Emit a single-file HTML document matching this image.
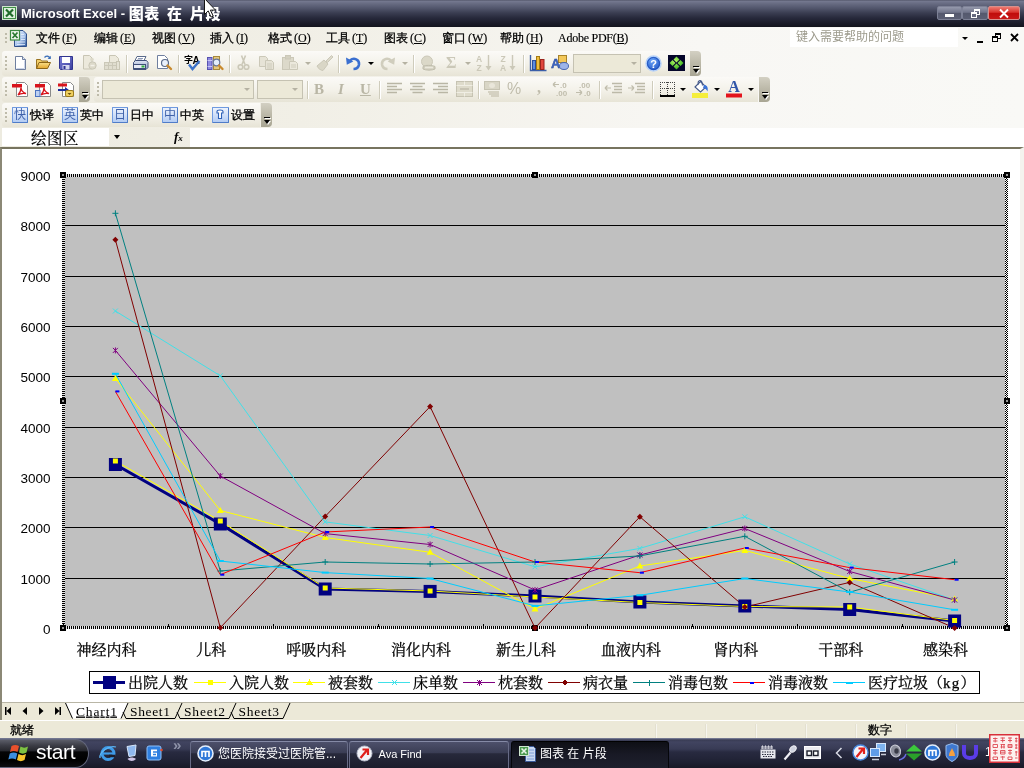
<!DOCTYPE html>
<html lang="zh-CN">
<head>
<meta charset="utf-8">
<title>Microsoft Excel - 图表 在 片段</title>
<style>
*{box-sizing:border-box;margin:0;padding:0}
html,body{width:1024px;height:768px;overflow:hidden;background:#fff}
body{will-change:transform;opacity:0.9999}
body{position:relative;font-family:"Liberation Serif","WenQuanYi Zen Hei","Noto Serif CJK SC",serif;font-size:12px;color:#000}
.abs,.i,.sep,.grip,.cap,.arr,.combo{position:absolute}
svg{overflow:visible}
#chart text{stroke:#000;stroke-width:0.25px}
#chart text.yl{stroke:none}
#titlebar{position:absolute;left:0;top:0;width:1024px;height:27px;background:linear-gradient(#4a4d60 0,#767a91 1px,#6a6e85 3px,#53576d 8px,#3a3d51 13px,#27293b 18px,#1b1c2a 23px,#13141d 27px)}
#title{position:absolute;left:21px;top:4px;color:#fff;font:bold 13px/18px "Liberation Sans","Noto Sans CJK SC",sans-serif;white-space:nowrap;letter-spacing:0}
#title b{font-size:15px;letter-spacing:0.6px;word-spacing:2.5px;position:relative;top:0.5px}
.wb{position:absolute;top:6px;height:14px;border:1px solid #7d8196;border-radius:2px;background:linear-gradient(#9599ac,#70748a 45%,#54586d 50%,#5b5f74)}
#dock{position:absolute;left:0;top:27px;width:1024px;height:121px;background:linear-gradient(90deg,#edebe0 0,#f1efe6 300px,#f8f7f4 700px,#f9f9f6 1024px)}
.mi{position:absolute;top:31px;font-size:12px;line-height:14px;white-space:nowrap;-webkit-text-stroke:0.3px #000}
.mi span,.mono{font-family:"Liberation Serif",serif;font-size:12px;letter-spacing:0;margin-left:2px;-webkit-text-stroke:0.15px #000}
.tb{position:absolute;left:2px;border-radius:3px 0 0 3px;background:linear-gradient(#fbfaf7 0,#f4f2ea 50%,#e7e4d6 100%)}
.cap{width:11px;border-radius:0 4px 4px 0;background:linear-gradient(#d3d0c3 0,#bdbaaa 45%,#a8a593 100%)}
.cap:before{content:"";position:absolute;left:3px;bottom:9px;width:6px;height:1px;background:#000;box-shadow:1px 1px 0 #fff}
.cap:after{content:"";position:absolute;left:3px;bottom:3px;border:3px solid transparent;border-top:4px solid #000;border-bottom:0;filter:drop-shadow(1px 1px 0 #fff)}
.grip{left:5px;width:2px;background:repeating-linear-gradient(#bebbaa 0,#bebbaa 2px,transparent 2px,transparent 4px)}
.sep{width:1px;height:18px;background:#cfccbc;box-shadow:1px 0 0 #fff}
.arr{width:0;height:0;border:3px solid transparent;border-top:3px solid #000;border-bottom:0;margin-left:-0.5px}
.arr.d{border-top-color:#b5b2a2}
.combo{background:#ece9d8;border:1px solid #c5c2b2}
#chartbg{position:absolute;left:0;top:147px;width:1024px;border-right:4px solid #f4f3ee;height:555px;background:#fff;border-top:2px solid #77745f;border-left:2px solid #8b8876}
#tabs{position:absolute;left:0;top:702px;width:1024px;height:18px;background:#ece9d8;border-top:1px solid #b9b6a6}
#status{position:absolute;left:0;top:720px;width:1024px;height:18px;background:#ece9d8;border-top:1px solid #fff}
#taskbar{position:absolute;left:0;top:738px;width:1024px;height:30px;background:linear-gradient(#8a8fa6 0,#5a5e78 1px,#3a3d55 2px,#414460 4px,#383b55 11px,#282a40 14px,#1f2133 24px,#181926 30px)}
.tbtn{position:absolute;top:3px;height:27px;border-radius:3px 3px 0 0;border:1px solid #676b86;border-bottom:0;border-top-color:#858aa6;background:linear-gradient(#4d506b 0,#3a3d54 42%,#27293b 45%,#1c1d2c 100%);color:#fff;font:12px "Liberation Sans","Noto Sans CJK SC",sans-serif;line-height:24px;white-space:nowrap;overflow:hidden}
.tbtn.act{background:linear-gradient(#0e0f15,#191a26 50%,#1d1f2c);border-color:#05060a;border-top-color:#000}
</style>
</head>
<body>
<div id="titlebar">
<svg class="abs" style="left:2px;top:5px" width="16" height="16" viewBox="0 0 16 16"><rect x="0.5" y="1.5" width="14" height="13" fill="#3f8f46" stroke="#cfe6cf"/><rect x="2" y="3" width="11" height="10" fill="#dff0df"/><path d="M4 4.5l7 7m0-7l-7 7" stroke="#1f6b2a" stroke-width="2.2"/></svg>
<div id="title">Microsoft Excel - <b>图表 在 片段</b></div>
<svg class="abs" style="left:204px;top:-2px" width="13" height="20" viewBox="0 0 13 20"><path d="M0.500 0.500v16l3.700-3.600l2.800 6.200l2.200-1l-2.800-6h5.100z" fill="#fff" stroke="#000" stroke-width="0.900"/></svg>
<div class="wb" style="left:937px;width:25px"><i class="abs" style="left:7px;top:7px;width:9px;height:3px;background:#fff"></i></div>
<div class="wb" style="left:962px;width:26px"><i class="abs" style="left:11px;top:2px;width:6px;height:6px;border:1px solid #fff;border-top-width:2px"></i><i class="abs" style="left:8px;top:5px;width:6px;height:6px;border:1px solid #fff;border-top-width:2px;background:#666a80"></i></div>
<div class="wb" style="left:988px;width:32px;background:linear-gradient(#ee7a70,#d8322c 45%,#c00c0a 50%,#c81818);border-color:#d8908c"><svg class="abs" style="left:10px;top:2px" width="10" height="9" viewBox="0 0 10 9"><path d="M1 0.500l8 8m0-8l-8 8" stroke="#fff" stroke-width="1.900"/></svg></div>
</div>
<div id="dock"></div>
<!-- menu bar -->
<div class="grip" style="top:33px;height:12px"></div>
<svg class="abs" style="left:10px;top:30px" width="18" height="18" viewBox="0 0 18 18"><defs><linearGradient id="gxl" x1="0" y1="0" x2="1" y2="1"><stop offset="0" stop-color="#f4f8ff"/><stop offset="0.55" stop-color="#a9c4ec"/><stop offset="1" stop-color="#2f5a9c"/></linearGradient></defs><path d="M4.500 0.500h8.500l3.500 3.500v12.500h-12z" fill="url(#gxl)" stroke="#2f4f8a"/><path d="M11 4.500h3M11 7h4M11 9.500h4M7 12h8M7 14.500h8" stroke="#e8f0fc" stroke-width="0.800"/><rect x="0.500" y="0.500" width="9" height="9.500" fill="#f2f8f0" stroke="#3c8a40" stroke-width="1.200"/><path d="M2.500 2.500l5 5.500m0-5.500l-5 5.500" stroke="#2a7a30" stroke-width="1.800"/></svg>
<span class="mi" style="left:36px">文件<span>(<u>F</u>)</span></span>
<span class="mi" style="left:94px">编辑<span>(<u>E</u>)</span></span>
<span class="mi" style="left:152px">视图<span>(<u>V</u>)</span></span>
<span class="mi" style="left:210px">插入<span>(<u>I</u>)</span></span>
<span class="mi" style="left:268px">格式<span>(<u>O</u>)</span></span>
<span class="mi" style="left:326px">工具<span>(<u>T</u>)</span></span>
<span class="mi" style="left:384px">图表<span>(<u>C</u>)</span></span>
<span class="mi" style="left:442px">窗口<span>(<u>W</u>)</span></span>
<span class="mi" style="left:500px">帮助<span>(<u>H</u>)</span></span>
<span class="mi" style="left:558px"><span style="margin-left:0;letter-spacing:-0.25px">Adobe PDF(<u>B</u>)</span></span>
<div class="abs" style="left:790px;top:28px;width:168px;height:19px;background:#fff"></div>
<span class="abs" style="left:796px;top:30px;font:12px/14px 'Liberation Sans','Noto Sans CJK SC',sans-serif;color:#9c9a8c;white-space:nowrap">键入需要帮助的问题</span>
<i class="arr" style="left:962px;top:37px"></i>
<i class="abs" style="left:977px;top:41px;width:6px;height:2px;background:#000"></i>
<i class="abs" style="left:995px;top:33px;width:6px;height:6px;border:1px solid #000;border-top-width:2px"></i><i class="abs" style="left:992px;top:36px;width:6px;height:6px;border:1px solid #000;border-top-width:2px;background:#f8f7f3"></i>
<svg class="abs" style="left:1010px;top:33px" width="9" height="9" viewBox="0 0 9 9"><path d="M1 1l7 7m0-7l-7 7" stroke="#000" stroke-width="1.8"/></svg>
<!-- toolbar 1 -->
<div class="tb" style="top:51px;height:25px;width:689px"></div>
<div class="cap" style="left:690px;top:51px;height:25px"></div>
<div class="grip" style="top:56px;height:14px"></div>
<svg width="0" height="0" style="position:absolute"><defs>
<linearGradient id="gdoc" x1="0" y1="0" x2="1" y2="1"><stop offset="0" stop-color="#fff"/><stop offset="0.5" stop-color="#f4f6fb"/><stop offset="1" stop-color="#b9c4dc"/></linearGradient>
<linearGradient id="gfold" x1="0" y1="0" x2="0" y2="1"><stop offset="0" stop-color="#fbe08a"/><stop offset="1" stop-color="#e2a52c"/></linearGradient>
<linearGradient id="gsave" x1="0" y1="0" x2="1" y2="1"><stop offset="0" stop-color="#7a7fd8"/><stop offset="1" stop-color="#3a3e9c"/></linearGradient>
<linearGradient id="gprn" x1="0" y1="0" x2="0" y2="1"><stop offset="0" stop-color="#dfe6f5"/><stop offset="1" stop-color="#8b9cc2"/></linearGradient>
<radialGradient id="ghelp" cx="0.4" cy="0.3" r="0.8"><stop offset="0" stop-color="#6aa4f8"/><stop offset="1" stop-color="#1a4fc0"/></radialGradient>
<radialGradient id="ggrn" cx="0.4" cy="0.35" r="0.7"><stop offset="0" stop-color="#b8f868"/><stop offset="1" stop-color="#2fae18"/></radialGradient>
</defs></svg>
<!-- new -->
<svg class="i" style="left:13px;top:55px" width="16" height="16" viewBox="0 0 16 16"><path d="M2.5 1.5h7l3 3v10h-10z" fill="#fff" stroke="#6f7f9f"/><path d="M9.5 1.5v3h3" fill="#dfe6f3" stroke="#6f7f9f"/><path d="M3.5 13.5h8v-8" stroke="#cdd6ea" fill="none"/></svg>
<!-- open -->
<svg class="i" style="left:35px;top:55px" width="17" height="16" viewBox="0 0 17 16"><path d="M1.5 13.5v-9h4l1 1.500h6v2" fill="#f3cf6a" stroke="#9a7320"/><path d="M1.500 13.500l2.500-6h11.500l-3 6z" fill="url(#gfold)" stroke="#8a6418"/><path d="M9.500 2.500c2-2 4.500-1.500 5.500 0.500" fill="none" stroke="#3c6fb8" stroke-width="1.300"/><path d="M15.800 0.800v3.200h-3.200z" fill="#3c6fb8"/></svg>
<!-- save -->
<svg class="i" style="left:59px;top:55px" width="15" height="16" viewBox="0 0 15 16"><path d="M0.500 1.500h13v13h-12l-1-1z" fill="url(#gsave)" stroke="#30348f"/><rect x="3" y="2" width="8" height="6" fill="#fff"/><rect x="3.500" y="10" width="7" height="4.500" fill="#d4d7ee"/><rect x="4.500" y="11" width="2" height="3" fill="#2d3191"/></svg>
<!-- permission (disabled) -->
<svg class="i" style="left:83px;top:55px" width="15" height="16" viewBox="0 0 15 16"><path d="M0.500 0.500h6l2.500 2.500v11h-8.500z" fill="#ece9dc" stroke="#c8c5b4"/><circle cx="9.500" cy="10.500" r="3.700" fill="#dcd9c9" stroke="#cbc8b8"/><rect x="7.500" y="9.800" width="4" height="1.500" fill="#f3f1e8"/><circle cx="9" cy="4.500" r="1.800" fill="#dcd9c9"/></svg>
<!-- email (disabled) -->
<svg class="i" style="left:104px;top:55px" width="17" height="16" viewBox="0 0 17 16"><path d="M5.500 0.500h6l3 3v7h-9z" fill="#ece9dc" stroke="#c8c5b4"/><rect x="0.500" y="7.500" width="12" height="7" fill="#e0ddcf" stroke="#cbc8b8"/><path d="M0.500 10.500h12M4.500 7.500v7M8.500 7.500v7" stroke="#cbc8b8"/><rect x="12.500" y="6.500" width="3" height="8" fill="#e5e2d5" stroke="#c8c5b4"/></svg>
<i class="sep" style="left:126px;top:55px"></i>
<!-- print -->
<svg class="i" style="left:132px;top:55px" width="17" height="16" viewBox="0 0 17 16"><path d="M5 1.500h9l-2.500 5h-9z" fill="#fff" stroke="#5b6b8b"/><path d="M6 3.500h5M5 5h5" stroke="#8e9bb8"/><path d="M1.500 7.500l2-2h11l1.500 2v5l-2 2h-12.500z" fill="url(#gprn)" stroke="#3f4f78"/><rect x="1.500" y="9.500" width="12" height="4" fill="#e7ebf5" stroke="#3f4f78"/><rect x="9.500" y="10.500" width="3" height="2" fill="#2fae3f"/></svg>
<!-- preview -->
<svg class="i" style="left:156px;top:55px" width="17" height="16" viewBox="0 0 17 16"><path d="M1.500 0.500h7l3 3v10h-10z" fill="#fff" stroke="#6f7f9f"/><circle cx="9" cy="8" r="3.500" fill="#eaf1fb" stroke="#5a6a8a" stroke-width="1.200"/><path d="M11.500 10.500l3.500 3.500" stroke="#c98a2e" stroke-width="2.400" stroke-linecap="round"/></svg>
<i class="sep" style="left:178px;top:55px"></i>
<!-- spelling -->
<svg class="i" style="left:184px;top:54px" width="19" height="18" viewBox="0 0 19 18"><text x="0" y="9" font-family="'Liberation Sans','Noto Sans CJK SC',sans-serif" font-size="9" font-weight="bold" fill="#000">字</text><text x="8.500" y="9.500" font-family="'Liberation Sans',sans-serif" font-size="10" font-weight="bold" fill="#000">A</text><path d="M5 10.500l3.500 4.500l7-8" fill="none" stroke="#3d73c9" stroke-width="2.400"/></svg>
<!-- research -->
<svg class="i" style="left:207px;top:55px" width="17" height="16" viewBox="0 0 17 16"><rect x="0.500" y="2.500" width="4.500" height="12" fill="#8f8ae0" stroke="#5752b0"/><path d="M0.500 5.500h4.500M0.500 11.500h4.500" stroke="#c9c6f5"/><rect x="6.500" y="1.500" width="6" height="13" fill="#e7c97a" stroke="#a5883c"/><circle cx="9.500" cy="7.500" r="3.300" fill="#e3eefb" stroke="#66769a" stroke-width="1.200"/><path d="M12 10.500l3.500 3.500" stroke="#c98a2e" stroke-width="2.400" stroke-linecap="round"/></svg>
<i class="sep" style="left:229px;top:55px"></i>
<!-- cut (disabled) -->
<svg class="i" style="left:237px;top:55px" width="13" height="16" viewBox="0 0 13 16"><path d="M4.500 0.500l3.500 9M8.500 0.500l-3.500 9" stroke="#cbc8b8" stroke-width="1.600" fill="none"/><circle cx="3.500" cy="12" r="2.300" fill="none" stroke="#cbc8b8" stroke-width="1.600"/><circle cx="9.500" cy="12" r="2.300" fill="none" stroke="#cbc8b8" stroke-width="1.600"/></svg>
<!-- copy (disabled) -->
<svg class="i" style="left:259px;top:55px" width="16" height="16" viewBox="0 0 16 16"><path d="M0.500 1.500h6l2 2v8h-8z" fill="#e6e3d6" stroke="#cbc8b8"/><path d="M6.500 5.500h6l2 2v7h-8z" fill="#e6e3d6" stroke="#cbc8b8"/><path d="M8 9h5M8 11h5M8 13h5" stroke="#cfccbc"/></svg>
<!-- paste (disabled) -->
<svg class="i" style="left:282px;top:55px" width="17" height="16" viewBox="0 0 17 16"><rect x="0.500" y="2.500" width="11" height="12" fill="#dcd9ca" stroke="#cbc8b8"/><rect x="3.500" y="0.500" width="5" height="3.500" fill="#d3d0c0" stroke="#cbc8b8"/><path d="M7.500 6.500h6l2 2v6h-8z" fill="#ebe8dc" stroke="#cbc8b8"/><path d="M9 10h5M9 12h5" stroke="#cfccbc"/></svg>
<i class="arr d" style="left:305px;top:62px"></i>
<!-- format painter (disabled) -->
<svg class="i" style="left:316px;top:55px" width="18" height="16" viewBox="0 0 18 16"><path d="M10 6l5.500-5.500l1.500 1.500l-5.500 5.500z" fill="#dcd9ca" stroke="#cbc8b8"/><path d="M1 11l7-6l4 4l-5 6.500c-2 0-5-2-6-4.500z" fill="#d9d6c6" stroke="#cbc8b8"/></svg>
<i class="sep" style="left:338px;top:55px"></i>
<!-- undo -->
<svg class="i" style="left:345px;top:55px" width="17" height="16" viewBox="0 0 17 16"><path d="M5 5.500c4-3.500 9.500-1 9 4c-0.500 3-3 4.500-5.500 4.500" fill="none" stroke="#3a6fd0" stroke-width="2.600"/><path d="M1 2.500l0.800 7.300l6.500-3.300z" fill="#3a6fd0"/></svg>
<i class="arr" style="left:368px;top:62px"></i>
<!-- redo (disabled) -->
<svg class="i" style="left:379px;top:55px" width="17" height="16" viewBox="0 0 17 16"><path d="M12 5.500c-4-3.500-9.500-1-9 4c0.500 3 3 4.500 5.500 4.500" fill="none" stroke="#d0cdbd" stroke-width="2.600"/><path d="M16 2.500l-0.800 7.300l-6.500-3.300z" fill="#d0cdbd"/></svg>
<i class="arr d" style="left:402px;top:62px"></i>
<i class="sep" style="left:413px;top:55px"></i>
<!-- hyperlink (disabled) -->
<svg class="i" style="left:419px;top:55px" width="18" height="16" viewBox="0 0 18 16"><circle cx="8" cy="6.500" r="5.500" fill="#dbd8c8" stroke="#cbc8b8"/><path d="M4 11.500c2-1.500 9-1.500 12 0v2.500c-3 1.500-9 1.500-12 0z" fill="#d3d0c0" stroke="#bfbcab"/><path d="M6 12.500h8" stroke="#ebe8dc" stroke-width="1.500"/></svg>
<!-- autosum (disabled) -->
<span class="abs" style="left:446px;top:53px;font:bold 16px/20px 'Liberation Serif',serif;color:#cbc8b8">Σ</span>
<i class="arr d" style="left:465px;top:62px"></i>
<!-- sort asc / desc (disabled) -->
<svg class="i" style="left:476px;top:54px" width="17" height="18" viewBox="0 0 17 18"><text x="0" y="8" font-family="'Liberation Sans',sans-serif" font-size="8.500" font-weight="bold" fill="#cbc8b8">A</text><text x="0.500" y="17" font-family="'Liberation Sans',sans-serif" font-size="8.500" font-weight="bold" fill="#cbc8b8">Z</text><path d="M12.500 1v13" stroke="#cbc8b8" stroke-width="1.400"/><path d="M9.500 12h6l-3 4.500z" fill="#cbc8b8"/></svg>
<svg class="i" style="left:500px;top:54px" width="17" height="18" viewBox="0 0 17 18"><text x="0.500" y="8" font-family="'Liberation Sans',sans-serif" font-size="8.500" font-weight="bold" fill="#cbc8b8">Z</text><text x="0" y="17" font-family="'Liberation Sans',sans-serif" font-size="8.500" font-weight="bold" fill="#cbc8b8">A</text><path d="M12.500 1v13" stroke="#cbc8b8" stroke-width="1.400"/><path d="M9.500 12h6l-3 4.500z" fill="#cbc8b8"/></svg>
<i class="sep" style="left:523px;top:55px"></i>
<!-- chart wizard -->
<svg class="i" style="left:529px;top:54px" width="18" height="18" viewBox="0 0 18 18"><path d="M1.500 1v15.500h16" fill="none" stroke="#3b5fa8" stroke-width="1.400"/><rect x="3.500" y="6.500" width="3" height="9" fill="#5b8de0" stroke="#2b4f9a"/><rect x="7.500" y="2.500" width="3" height="13" fill="#f0c040" stroke="#a67c12"/><rect x="11.500" y="5.500" width="3.500" height="10" fill="#e0463c" stroke="#9a231c"/></svg>
<!-- drawing -->
<svg class="i" style="left:551px;top:55px" width="18" height="16" viewBox="0 0 18 16"><rect x="7.500" y="0.500" width="8" height="7" fill="#f3c85a" stroke="#a8832a"/><text x="0" y="13" font-family="'Liberation Sans',sans-serif" font-size="13" font-weight="bold" fill="#3d66c4" stroke="#26448f" stroke-width="0.400">A</text><ellipse cx="13" cy="11" rx="4.500" ry="3.500" fill="#9db4e8" stroke="#4766b0"/></svg>
<div class="combo" style="left:573px;top:54px;width:68px;height:19px"></div>
<i class="arr d" style="left:631px;top:62px"></i>
<!-- help -->
<svg class="i" style="left:645px;top:55px" width="17" height="17" viewBox="0 0 17 17"><circle cx="8.500" cy="8.500" r="7.500" fill="url(#ghelp)" stroke="#b8d2f8" stroke-width="1.500"/><circle cx="8.500" cy="8.500" r="6" fill="none" stroke="#1a4db8" stroke-width="0.800"/><text x="8.500" y="12.500" text-anchor="middle" font-family="'Liberation Sans',sans-serif" font-size="11" font-weight="bold" fill="#fff">?</text></svg>
<!-- green tool -->
<svg class="i" style="left:668px;top:55px" width="17" height="16" viewBox="0 0 17 16"><rect width="17" height="16" fill="#05062a"/><path d="M8.500 1.500l3 3l-3 3l-3-3z M4.500 5l3 3l-3 3l-3-3z M12.500 5l3 3l-3 3l-3-3z M8.500 8.500l3 3l-3 3l-3-3z" fill="url(#ggrn)"/></svg>
<!-- toolbar 2 (PDF + formatting) -->
<div class="tb" style="top:77px;height:25px;width:77px"></div>
<div class="cap" style="left:79px;top:77px;height:25px"></div>
<div class="grip" style="top:82px;height:14px"></div>
<svg class="i" style="left:12px;top:81px" width="17" height="17" viewBox="0 0 17 17"><path d="M4.500 1.500h8l3 3v11h-11z" fill="#fff" stroke="#8a8a8a"/><rect x="0" y="3" width="10" height="3.500" fill="#d8141c"/><path d="M6 14c2-2 3-5 3-7.500c0 2.500 2 5 5 6c-3-0.500-6 0-8 1.500z" fill="none" stroke="#d8141c" stroke-width="1.300"/></svg>
<svg class="i" style="left:35px;top:81px" width="17" height="17" viewBox="0 0 17 17"><path d="M4.500 1.500h8l3 3v11h-11z" fill="#fff" stroke="#8a8a8a"/><rect x="0" y="3" width="10" height="3.500" fill="#d8141c"/><path d="M6 14c2-2 3-5 3-7.500c0 2.500 2 5 5 6c-3-0.500-6 0-8 1.500z" fill="none" stroke="#d8141c" stroke-width="1.300"/><rect x="0.500" y="9.500" width="4.500" height="6" fill="#bcd0f2" stroke="#4a72c0"/></svg>
<svg class="i" style="left:58px;top:81px" width="17" height="17" viewBox="0 0 17 17"><path d="M4.500 1.500h8l3 3v11h-11z" fill="#fff" stroke="#8a8a8a"/><rect x="0" y="2.500" width="9" height="3" fill="#d8141c"/><path d="M0 8h7v-2l4 3l-4 3v-2h-7z" fill="#1d2f9a"/><rect x="7.500" y="9.500" width="8" height="6" rx="1.500" fill="#f0d060" stroke="#9a7a1a"/><path d="M9.500 12h4l-2 2z" fill="#6a5210"/></svg>
<div class="tb" style="left:94px;top:77px;height:25px;width:664px"></div>
<div class="cap" style="left:759px;top:77px;height:25px"></div>
<div class="grip" style="left:97px;top:82px;height:14px"></div>
<div class="combo" style="left:102px;top:80px;width:152px;height:19px"></div>
<i class="arr d" style="left:244px;top:88px"></i>
<div class="combo" style="left:257px;top:80px;width:46px;height:19px"></div>
<i class="arr d" style="left:292px;top:88px"></i>
<i class="sep" style="left:307px;top:81px"></i>
<span class="abs" style="left:314px;top:80px;font:bold 15px/18px 'Liberation Serif',serif;color:#b9b6a5">B</span>
<span class="abs" style="left:338px;top:80px;font:italic bold 15px/18px 'Liberation Serif',serif;color:#b9b6a5">I</span>
<span class="abs" style="left:360px;top:80px;font:bold 15px/18px 'Liberation Serif',serif;color:#b9b6a5;text-decoration:underline">U</span>
<i class="sep" style="left:379px;top:81px"></i>
<svg class="i" style="left:387px;top:82px" width="16" height="14" viewBox="0 0 16 14"><path d="M0 1.500h15M0 4.500h10M0 7.500h15M0 10.500h10" stroke="#b9b6a5" stroke-width="1.300"/></svg>
<svg class="i" style="left:410px;top:82px" width="16" height="14" viewBox="0 0 16 14"><path d="M0 1.500h15M2.500 4.500h10M0 7.500h15M2.500 10.500h10" stroke="#b9b6a5" stroke-width="1.300"/></svg>
<svg class="i" style="left:433px;top:82px" width="16" height="14" viewBox="0 0 16 14"><path d="M0 1.500h15M5 4.500h10M0 7.500h15M5 10.500h10" stroke="#b9b6a5" stroke-width="1.300"/></svg>
<svg class="i" style="left:456px;top:81px" width="17" height="16" viewBox="0 0 17 16"><rect x="0.500" y="0.500" width="16" height="15" fill="#dedbcb" stroke="#c6c3b2"/><path d="M0.500 4.500h16M0.500 11.500h16M8.500 0.500v4M8.500 11.500v4" stroke="#f0eee4"/><path d="M4 8h9" stroke="#c0bdac" stroke-width="1.500"/></svg>
<i class="sep" style="left:478px;top:81px"></i>
<svg class="i" style="left:484px;top:81px" width="17" height="16" viewBox="0 0 17 16"><rect x="0.500" y="0.500" width="15" height="8" fill="#d9d6c6" stroke="#c6c3b2"/><ellipse cx="8" cy="4.500" rx="3" ry="2.500" fill="#e9e6da"/><path d="M4 11h11M5 13h10M7 15h8" stroke="#cbc8b7" stroke-width="1.400"/></svg>
<span class="abs" style="left:507px;top:79px;font:16px/20px 'Liberation Sans',sans-serif;color:#c0bdac">%</span>
<span class="abs" style="left:537px;top:78px;font:bold 16px/20px 'Liberation Serif',serif;color:#c0bdac">,</span>
<svg class="i" style="left:553px;top:81px" width="17" height="16" viewBox="0 0 17 16"><path d="M0 3.500h6M0 3.500l2.500-2.500M0 3.500l2.500 2.500" stroke="#c0bdac" stroke-width="1.200" fill="none"/><text x="7" y="7" font-family="'Liberation Sans',sans-serif" font-size="8" font-weight="bold" fill="#c0bdac">.0</text><text x="3" y="15" font-family="'Liberation Sans',sans-serif" font-size="8" font-weight="bold" fill="#c0bdac">.00</text></svg>
<svg class="i" style="left:576px;top:81px" width="17" height="16" viewBox="0 0 17 16"><text x="3" y="7" font-family="'Liberation Sans',sans-serif" font-size="8" font-weight="bold" fill="#c0bdac">.00</text><path d="M0 11.500h6M6 11.500l-2.500-2.500M6 11.500l-2.500 2.500" stroke="#c0bdac" stroke-width="1.200" fill="none"/><text x="8" y="15" font-family="'Liberation Sans',sans-serif" font-size="8" font-weight="bold" fill="#c0bdac">.0</text></svg>
<i class="sep" style="left:599px;top:81px"></i>
<svg class="i" style="left:605px;top:82px" width="18" height="14" viewBox="0 0 18 14"><path d="M7 1.500h10M9 4.500h8M9 7.500h8M7 10.500h10" stroke="#bcb9a8" stroke-width="1.300"/><path d="M0 6h6M0 6l2.500-2.500M0 6l2.500 2.500" stroke="#c0bdac" stroke-width="1.200" fill="none"/></svg>
<svg class="i" style="left:628px;top:82px" width="18" height="14" viewBox="0 0 18 14"><path d="M7 1.500h10M9 4.500h8M9 7.500h8M7 10.500h10" stroke="#bcb9a8" stroke-width="1.300"/><path d="M0 6h6M6 6l-2.500-2.500M6 6l-2.500 2.500" stroke="#c0bdac" stroke-width="1.200" fill="none"/></svg>
<i class="sep" style="left:652px;top:81px"></i>
<svg class="i" style="left:660px;top:82px" width="15" height="15" viewBox="0 0 15 15" shape-rendering="crispEdges"><path d="M0 0.500h15M0 6.500h15M0.500 0v13M7.500 0v13M14.500 0v13" stroke="#444" stroke-dasharray="1 1" fill="none"/><path d="M0 13.500h15" stroke="#000" stroke-width="2"/></svg>
<i class="arr" style="left:680px;top:88px"></i>
<svg class="i" style="left:692px;top:79px" width="17" height="19" viewBox="0 0 17 19"><rect x="0" y="14" width="16" height="5" fill="#f5ee3c"/><path d="M3 8l5.500-5.500l5.500 5.500l-5.500 5z" fill="#fff" stroke="#44598a" stroke-width="1.100"/><path d="M6.500 5.500c-1.500-4 2.500-5.500 3.500-2l0.500 3" fill="none" stroke="#44598a" stroke-width="1.100"/><path d="M12 6c3 0 4.500 2.500 3.500 6.500c-0.800-2-2-3-4.500-3.500z" fill="#3c74d8"/></svg>
<i class="arr" style="left:714px;top:88px"></i>
<svg class="i" style="left:726px;top:79px" width="17" height="19" viewBox="0 0 17 19"><text x="8" y="13" text-anchor="middle" font-family="'Liberation Serif',serif" font-size="16" font-weight="bold" fill="#2f55a8">A</text><rect x="0" y="14.500" width="16" height="4" fill="#e3141c"/></svg>
<i class="arr" style="left:748px;top:88px"></i>
<!-- toolbar 3 (translate) -->
<div class="tb" style="top:103px;height:24px;width:258px"></div>
<div class="cap" style="left:261px;top:103px;height:24px"></div>
<div class="grip" style="top:108px;height:14px"></div>
<div class="abs tk" style="left:12px">快</div><span class="abs tt" style="left:30px">快译</span>
<div class="abs tk" style="left:62px">英</div><span class="abs tt" style="left:80px">英中</span>
<div class="abs tk" style="left:112px">日</div><span class="abs tt" style="left:130px">日中</span>
<div class="abs tk" style="left:162px">中</div><span class="abs tt" style="left:180px">中英</span>
<div class="abs tk" style="left:212px;width:17px"><svg width="15" height="14" viewBox="0 0 15 14" style="position:absolute;left:0;top:0"><path d="M4 3.500c0-2 6-2 6 0v1.500h-1.500v5.500h-3v-5.500h-1.500z" fill="#fff" stroke="#2f62b8" stroke-width="1.100"/></svg></div><span class="abs tt" style="left:231px">设置</span>
<style>
.tk{top:107px;width:16px;height:16px;border:1px solid #6f9ae0;border-right-color:#4f7cc8;border-bottom-color:#4f7cc8;border-radius:1px;background:linear-gradient(#edf3fd,#b3ccf4);color:#3f62aa;font:400 12px/14px "Liberation Sans","Noto Sans CJK SC",sans-serif;text-align:center;overflow:hidden}
.tt{top:108px;font-size:12px;line-height:14px;white-space:nowrap;-webkit-text-stroke:0.3px #000}
</style>
<!-- formula bar -->
<div class="abs" style="left:2px;top:128px;width:107px;height:18px;background:#fff"></div>
<span class="abs" style="left:31px;top:128.5px;font-family:'Liberation Serif','Noto Serif CJK SC',serif;font-size:15.5px;line-height:19px;-webkit-text-stroke:0.2px #000;white-space:nowrap;letter-spacing:0.5px">绘图区</span>
<i class="arr" style="left:114px;top:135px;border-width:3px;border-top-width:4px"></i>
<span class="abs" style="left:174px;top:128px;font:italic bold 13px/18px 'Liberation Serif',serif">f<span style="font-size:9px">x</span></span>
<div class="abs" style="left:190px;top:128px;width:834px;height:19px;background:#fff"></div>
<div id="chartbg"></div>
<svg id="chart" width="1024" height="560" viewBox="0 148 1024 560" style="position:absolute;left:0;top:148px" shape-rendering="crispEdges">
<rect x="63" y="175" width="944" height="453" fill="#c0c0c0"/>
<rect x="63" y="578" width="944" height="1" fill="#000"/>
<rect x="63" y="527" width="944" height="1" fill="#000"/>
<rect x="63" y="477" width="944" height="1" fill="#000"/>
<rect x="63" y="427" width="944" height="1" fill="#000"/>
<rect x="63" y="376" width="944" height="1" fill="#000"/>
<rect x="63" y="326" width="944" height="1" fill="#000"/>
<rect x="63" y="276" width="944" height="1" fill="#000"/>
<rect x="63" y="225" width="944" height="1" fill="#000"/>
<defs><pattern id="chk" width="2" height="2" patternUnits="userSpaceOnUse"><rect width="2" height="2" fill="#fff"/><rect width="1" height="1" fill="#000"/><rect x="1" y="1" width="1" height="1" fill="#000"/></pattern><pattern id="ph" width="2" height="2" patternUnits="userSpaceOnUse"><rect width="2" height="2" fill="#e8e8e8"/><rect x="1" width="1" height="2" fill="#000"/></pattern><pattern id="pv" width="2" height="2" patternUnits="userSpaceOnUse"><rect width="2" height="2" fill="#e8e8e8"/><rect y="1" width="2" height="1" fill="#000"/></pattern></defs>
<rect x="62" y="174" width="946" height="3" fill="url(#ph)"/>
<rect x="62" y="626" width="946" height="3" fill="url(#ph)"/>
<rect x="62" y="174" width="3" height="455" fill="url(#pv)"/>
<rect x="1005" y="174" width="3" height="455" fill="url(#chk)"/>
<rect x="63" y="624" width="1" height="3" fill="#000"/>
<rect x="168" y="624" width="1" height="3" fill="#000"/>
<rect x="273" y="624" width="1" height="3" fill="#000"/>
<rect x="378" y="624" width="1" height="3" fill="#000"/>
<rect x="483" y="624" width="1" height="3" fill="#000"/>
<rect x="587" y="624" width="1" height="3" fill="#000"/>
<rect x="692" y="624" width="1" height="3" fill="#000"/>
<rect x="797" y="624" width="1" height="3" fill="#000"/>
<rect x="902" y="624" width="1" height="3" fill="#000"/>
<rect x="1007" y="624" width="1" height="3" fill="#000"/>
<rect x="60" y="172" width="6" height="6" fill="#000"/><rect x="62" y="174" width="2" height="2" fill="#999"/>
<rect x="532" y="172" width="6" height="6" fill="#000"/><rect x="534" y="174" width="2" height="2" fill="#999"/>
<rect x="1004" y="172" width="6" height="6" fill="#000"/><rect x="1006" y="174" width="2" height="2" fill="#999"/>
<rect x="60" y="398" width="6" height="6" fill="#000"/><rect x="62" y="400" width="2" height="2" fill="#999"/>
<rect x="1004" y="398" width="6" height="6" fill="#000"/><rect x="1006" y="400" width="2" height="2" fill="#999"/>
<rect x="60" y="625" width="6" height="6" fill="#000"/><rect x="62" y="627" width="2" height="2" fill="#999"/>
<rect x="532" y="625" width="6" height="6" fill="#000"/><rect x="534" y="627" width="2" height="2" fill="#999"/>
<rect x="1004" y="625" width="6" height="6" fill="#000"/><rect x="1006" y="627" width="2" height="2" fill="#999"/>
<g shape-rendering="auto">
<polyline points="115.4,464.5 220.3,524.0 325.2,589.0 430.1,591.4 535.0,596.0 639.9,602.0 744.8,606.0 849.7,609.5 954.6,621.0" fill="none" stroke="#000080" stroke-width="3"/>
<polyline points="115.4,461.0 220.3,521.0 325.2,588.0 430.1,591.0 535.0,597.0 639.9,602.5 744.8,606.5 849.7,607.0 954.6,620.5" fill="none" stroke="#ffff00" stroke-width="1"/>
<polyline points="115.4,378.5 220.3,510.5 325.2,537.5 430.1,552.3 535.0,609.0 639.9,566.0 744.8,550.4 849.7,578.5 954.6,599.0" fill="none" stroke="#ffff00" stroke-width="1"/>
<polyline points="115.4,311.0 220.3,375.8 325.2,521.9 430.1,535.5 535.0,566.8 639.9,548.4 744.8,516.8 849.7,564.0 954.6,600.0" fill="none" stroke="#40e0e8" stroke-width="1"/>
<polyline points="115.4,350.4 220.3,476.0 325.2,533.6 430.1,544.5 535.0,590.0 639.9,555.0 744.8,528.5 849.7,571.5 954.6,600.0" fill="none" stroke="#800080" stroke-width="1"/>
<polyline points="115.4,239.8 220.3,627.7 325.2,516.4 430.1,406.6 535.0,628.0 639.9,516.8 744.8,607.0 849.7,582.4 954.6,628.0" fill="none" stroke="#800000" stroke-width="1"/>
<polyline points="115.4,213.3 220.3,571.0 325.2,562.0 430.1,564.0 535.0,562.0 639.9,555.9 744.8,536.3 849.7,592.2 954.6,562.0" fill="none" stroke="#008080" stroke-width="1"/>
<polyline points="115.4,391.4 220.3,574.7 325.2,532.0 430.1,527.0 535.0,562.0 639.9,572.7 744.8,548.0 849.7,567.6 954.6,579.7" fill="none" stroke="#ff0000" stroke-width="1"/>
<polyline points="115.4,373.8 220.3,561.0 325.2,572.6 430.1,578.5 535.0,605.9 639.9,595.3 744.8,578.5 849.7,592.0 954.6,609.8" fill="none" stroke="#00ccff" stroke-width="1"/>
<rect x="108.9" y="458.0" width="13" height="13" fill="#000080"/>
<rect x="213.8" y="517.5" width="13" height="13" fill="#000080"/>
<rect x="318.7" y="582.5" width="13" height="13" fill="#000080"/>
<rect x="423.6" y="584.9" width="13" height="13" fill="#000080"/>
<rect x="528.5" y="589.5" width="13" height="13" fill="#000080"/>
<rect x="633.4" y="595.5" width="13" height="13" fill="#000080"/>
<rect x="738.3" y="599.5" width="13" height="13" fill="#000080"/>
<rect x="843.2" y="603.0" width="13" height="13" fill="#000080"/>
<rect x="948.1" y="614.5" width="13" height="13" fill="#000080"/>
<rect x="112.9" y="458.5" width="5" height="5" fill="#ffff00"/>
<rect x="217.8" y="518.5" width="5" height="5" fill="#ffff00"/>
<rect x="322.7" y="585.5" width="5" height="5" fill="#ffff00"/>
<rect x="427.6" y="588.5" width="5" height="5" fill="#ffff00"/>
<rect x="532.5" y="594.5" width="5" height="5" fill="#ffff00"/>
<rect x="637.4" y="600.0" width="5" height="5" fill="#ffff00"/>
<rect x="742.3" y="604.0" width="5" height="5" fill="#ffff00"/>
<rect x="847.2" y="604.5" width="5" height="5" fill="#ffff00"/>
<rect x="952.1" y="618.0" width="5" height="5" fill="#ffff00"/>
<path d="M115.4 375.0 l3.5 6 h-7z" fill="#ffff00"/>
<path d="M220.3 507.0 l3.5 6 h-7z" fill="#ffff00"/>
<path d="M325.2 534.0 l3.5 6 h-7z" fill="#ffff00"/>
<path d="M430.1 548.8 l3.5 6 h-7z" fill="#ffff00"/>
<path d="M535.0 605.5 l3.5 6 h-7z" fill="#ffff00"/>
<path d="M639.9 562.5 l3.5 6 h-7z" fill="#ffff00"/>
<path d="M744.8 546.9 l3.5 6 h-7z" fill="#ffff00"/>
<path d="M849.7 575.0 l3.5 6 h-7z" fill="#ffff00"/>
<path d="M954.6 595.5 l3.5 6 h-7z" fill="#ffff00"/>
<path d="M112.9 308.5 l5 5 m0 -5 l-5 5" stroke="#40e0e8" stroke-width="1" fill="none"/>
<path d="M217.8 373.3 l5 5 m0 -5 l-5 5" stroke="#40e0e8" stroke-width="1" fill="none"/>
<path d="M322.7 519.4 l5 5 m0 -5 l-5 5" stroke="#40e0e8" stroke-width="1" fill="none"/>
<path d="M427.6 533.0 l5 5 m0 -5 l-5 5" stroke="#40e0e8" stroke-width="1" fill="none"/>
<path d="M532.5 564.3 l5 5 m0 -5 l-5 5" stroke="#40e0e8" stroke-width="1" fill="none"/>
<path d="M637.4 545.9 l5 5 m0 -5 l-5 5" stroke="#40e0e8" stroke-width="1" fill="none"/>
<path d="M742.3 514.3 l5 5 m0 -5 l-5 5" stroke="#40e0e8" stroke-width="1" fill="none"/>
<path d="M847.2 561.5 l5 5 m0 -5 l-5 5" stroke="#40e0e8" stroke-width="1" fill="none"/>
<path d="M952.1 597.5 l5 5 m0 -5 l-5 5" stroke="#40e0e8" stroke-width="1" fill="none"/>
<path d="M112.9 347.9 l5 5 m0 -5 l-5 5 m2.5 -5.5 v6" stroke="#800080" stroke-width="1" fill="none"/>
<path d="M217.8 473.5 l5 5 m0 -5 l-5 5 m2.5 -5.5 v6" stroke="#800080" stroke-width="1" fill="none"/>
<path d="M322.7 531.1 l5 5 m0 -5 l-5 5 m2.5 -5.5 v6" stroke="#800080" stroke-width="1" fill="none"/>
<path d="M427.6 542.0 l5 5 m0 -5 l-5 5 m2.5 -5.5 v6" stroke="#800080" stroke-width="1" fill="none"/>
<path d="M532.5 587.5 l5 5 m0 -5 l-5 5 m2.5 -5.5 v6" stroke="#800080" stroke-width="1" fill="none"/>
<path d="M637.4 552.5 l5 5 m0 -5 l-5 5 m2.5 -5.5 v6" stroke="#800080" stroke-width="1" fill="none"/>
<path d="M742.3 526.0 l5 5 m0 -5 l-5 5 m2.5 -5.5 v6" stroke="#800080" stroke-width="1" fill="none"/>
<path d="M847.2 569.0 l5 5 m0 -5 l-5 5 m2.5 -5.5 v6" stroke="#800080" stroke-width="1" fill="none"/>
<path d="M952.1 597.5 l5 5 m0 -5 l-5 5 m2.5 -5.5 v6" stroke="#800080" stroke-width="1" fill="none"/>
<path d="M115.4 236.8 l3 3 l-3 3 l-3 -3z" fill="#800000"/>
<path d="M220.3 624.7 l3 3 l-3 3 l-3 -3z" fill="#800000"/>
<path d="M325.2 513.4 l3 3 l-3 3 l-3 -3z" fill="#800000"/>
<path d="M430.1 403.6 l3 3 l-3 3 l-3 -3z" fill="#800000"/>
<path d="M535.0 625.0 l3 3 l-3 3 l-3 -3z" fill="#800000"/>
<path d="M639.9 513.8 l3 3 l-3 3 l-3 -3z" fill="#800000"/>
<path d="M744.8 604.0 l3 3 l-3 3 l-3 -3z" fill="#800000"/>
<path d="M849.7 579.4 l3 3 l-3 3 l-3 -3z" fill="#800000"/>
<path d="M954.6 625.0 l3 3 l-3 3 l-3 -3z" fill="#800000"/>
<path d="M112.4 213.3 h6 m-3 -3 v6" stroke="#008080" stroke-width="1" fill="none"/>
<path d="M217.3 571.0 h6 m-3 -3 v6" stroke="#008080" stroke-width="1" fill="none"/>
<path d="M322.2 562.0 h6 m-3 -3 v6" stroke="#008080" stroke-width="1" fill="none"/>
<path d="M427.1 564.0 h6 m-3 -3 v6" stroke="#008080" stroke-width="1" fill="none"/>
<path d="M532.0 562.0 h6 m-3 -3 v6" stroke="#008080" stroke-width="1" fill="none"/>
<path d="M636.9 555.9 h6 m-3 -3 v6" stroke="#008080" stroke-width="1" fill="none"/>
<path d="M741.8 536.3 h6 m-3 -3 v6" stroke="#008080" stroke-width="1" fill="none"/>
<path d="M846.7 592.2 h6 m-3 -3 v6" stroke="#008080" stroke-width="1" fill="none"/>
<path d="M951.6 562.0 h6 m-3 -3 v6" stroke="#008080" stroke-width="1" fill="none"/>
<rect x="115.4" y="390.4" width="4" height="2" fill="#0000ff"/>
<rect x="220.3" y="573.7" width="4" height="2" fill="#0000ff"/>
<rect x="325.2" y="531.0" width="4" height="2" fill="#0000ff"/>
<rect x="430.1" y="526.0" width="4" height="2" fill="#0000ff"/>
<rect x="535.0" y="561.0" width="4" height="2" fill="#0000ff"/>
<rect x="639.9" y="571.7" width="4" height="2" fill="#0000ff"/>
<rect x="744.8" y="547.0" width="4" height="2" fill="#0000ff"/>
<rect x="849.7" y="566.6" width="4" height="2" fill="#0000ff"/>
<rect x="954.6" y="578.7" width="4" height="2" fill="#0000ff"/>
<rect x="111.9" y="372.8" width="7" height="2" fill="#00ccff"/>
<rect x="216.8" y="560.0" width="7" height="2" fill="#00ccff"/>
<rect x="321.7" y="571.6" width="7" height="2" fill="#00ccff"/>
<rect x="426.6" y="577.5" width="7" height="2" fill="#00ccff"/>
<rect x="531.5" y="604.9" width="7" height="2" fill="#00ccff"/>
<rect x="636.4" y="594.3" width="7" height="2" fill="#00ccff"/>
<rect x="741.3" y="577.5" width="7" height="2" fill="#00ccff"/>
<rect x="846.2" y="591.0" width="7" height="2" fill="#00ccff"/>
<rect x="951.1" y="608.8" width="7" height="2" fill="#00ccff"/>
</g>
<g font-family="'Liberation Serif','Noto Serif CJK SC',serif" font-size="15" fill="#000">
<text x="50.500" y="633.6" text-anchor="end" class="yl" font-family="'Liberation Sans',sans-serif" font-size="13.500">0</text>
<text x="50.500" y="583.6" text-anchor="end" class="yl" font-family="'Liberation Sans',sans-serif" font-size="13.500">1000</text>
<text x="50.500" y="532.6" text-anchor="end" class="yl" font-family="'Liberation Sans',sans-serif" font-size="13.500">2000</text>
<text x="50.500" y="482.6" text-anchor="end" class="yl" font-family="'Liberation Sans',sans-serif" font-size="13.500">3000</text>
<text x="50.500" y="432.6" text-anchor="end" class="yl" font-family="'Liberation Sans',sans-serif" font-size="13.500">4000</text>
<text x="50.500" y="381.6" text-anchor="end" class="yl" font-family="'Liberation Sans',sans-serif" font-size="13.500">5000</text>
<text x="50.500" y="331.6" text-anchor="end" class="yl" font-family="'Liberation Sans',sans-serif" font-size="13.500">6000</text>
<text x="50.500" y="281.6" text-anchor="end" class="yl" font-family="'Liberation Sans',sans-serif" font-size="13.500">7000</text>
<text x="50.500" y="230.6" text-anchor="end" class="yl" font-family="'Liberation Sans',sans-serif" font-size="13.500">8000</text>
<text x="50.500" y="180.6" text-anchor="end" class="yl" font-family="'Liberation Sans',sans-serif" font-size="13.500">9000</text>
<text x="106.4" y="655" text-anchor="middle">神经内科</text>
<text x="211.3" y="655" text-anchor="middle">儿科</text>
<text x="316.2" y="655" text-anchor="middle">呼吸内科</text>
<text x="421.1" y="655" text-anchor="middle">消化内科</text>
<text x="526.0" y="655" text-anchor="middle">新生儿科</text>
<text x="630.9" y="655" text-anchor="middle">血液内科</text>
<text x="735.8" y="655" text-anchor="middle">肾内科</text>
<text x="840.7" y="655" text-anchor="middle">干部科</text>
<text x="945.6" y="655" text-anchor="middle">感染科</text>
<rect x="89.5" y="671.5" width="890" height="22" fill="#fff" stroke="#000" stroke-width="1"/>
<line x1="93" y1="682.5" x2="125" y2="682.5" stroke="#000080" stroke-width="3"/>
<rect x="103.0" y="676.0" width="13" height="13" fill="#000080"/>
<text x="128" y="688">出院人数</text>
<line x1="194" y1="682.5" x2="226" y2="682.5" stroke="#ffff00" stroke-width="1"/>
<rect x="208.0" y="680.0" width="5" height="5" fill="#ffff00"/>
<text x="229" y="688">入院人数</text>
<line x1="293" y1="682.5" x2="325" y2="682.5" stroke="#ffff00" stroke-width="1"/>
<path d="M309.5 679.0 l3.5 6 h-7z" fill="#ffff00"/>
<text x="328" y="688">被套数</text>
<line x1="378" y1="682.5" x2="410" y2="682.5" stroke="#40e0e8" stroke-width="1"/>
<path d="M392.0 680.0 l5 5 m0 -5 l-5 5" stroke="#40e0e8" stroke-width="1" fill="none"/>
<text x="413" y="688">床单数</text>
<line x1="463" y1="682.5" x2="495" y2="682.5" stroke="#800080" stroke-width="1"/>
<path d="M477.0 680.0 l5 5 m0 -5 l-5 5 m2.5 -5.5 v6" stroke="#800080" stroke-width="1" fill="none"/>
<text x="498" y="688">枕套数</text>
<line x1="548" y1="682.5" x2="580" y2="682.5" stroke="#800000" stroke-width="1"/>
<path d="M564.5 679.5 l3 3 l-3 3 l-3 -3z" fill="#800000"/>
<text x="583" y="688">病衣量</text>
<line x1="633" y1="682.5" x2="665" y2="682.5" stroke="#008080" stroke-width="1"/>
<path d="M646.5 682.5 h6 m-3 -3 v6" stroke="#008080" stroke-width="1" fill="none"/>
<text x="668" y="688">消毒包数</text>
<line x1="733" y1="682.5" x2="765" y2="682.5" stroke="#ff0000" stroke-width="1"/>
<rect x="749.5" y="681.5" width="4" height="2" fill="#0000ff"/>
<text x="768" y="688">消毒液数</text>
<line x1="833" y1="682.5" x2="865" y2="682.5" stroke="#00ccff" stroke-width="1"/>
<rect x="846.0" y="681.5" width="7" height="2" fill="#00ccff"/>
<text x="868" y="688">医疗垃圾（<tspan letter-spacing="1.2">kg</tspan>）</text>
</g>
</svg><div id="tabs">
<div class="abs" style="left:0;top:-1px;width:2px;height:19px;background:#8b8876"></div>
<svg class="abs" style="left:0;top:0" width="300" height="17" viewBox="0 0 300 17">
<g fill="#000"><path d="M5 4h1.500v8h-1.500zM11 4v8l-4.500-4z"/><path d="M27 4v8l-4.500-4z"/><path d="M39 4v8l4.500-4z"/><path d="M55 4v8l4.500-4zM59.500 4h1.500v8h-1.500z"/></g>
<path d="M65.500 0l7 15.500h48.500l7-15.500z" fill="#fff"/>
<path d="M65.500 0l7 15.500M128 0l-7 15.500M123 9l3 6.500M182 0l-7 15.500M177 9l3 6.500M236 0l-7 15.500M231 9l3 6.500M290 0l-7 15.500M126 15.500h49M180 15.500h49M234 15.500h49" fill="none" stroke="#000" stroke-width="1"/>
<g font-family="'Liberation Serif',serif" font-size="13.500">
<text x="76" y="12.500" textLength="41" text-decoration="underline">Chart1</text>
<text x="130" y="12.500" textLength="40">Sheet1</text>
<text x="184" y="12.500" textLength="41">Sheet2</text>
<text x="238.500" y="12.500" textLength="40.500">Sheet3</text>
</g>
</svg>
</div>
<div id="status"><span class="abs" style="left:10px;top:2px;line-height:14px;-webkit-text-stroke:0.3px #000">就绪</span><span class="abs" style="left:868px;top:2px;line-height:14px;-webkit-text-stroke:0.3px #000">数字</span>
<i class="abs" style="left:655px;top:3px;width:1px;height:14px;background:#e3e0d0;box-shadow:1px 0 #f6f5ee,50px 0 #e3e0d0,51px 0 #f6f5ee,100px 0 #e3e0d0,101px 0 #f6f5ee,150px 0 #e3e0d0,151px 0 #f6f5ee,200px 0 #e3e0d0,201px 0 #f6f5ee,250px 0 #e3e0d0,251px 0 #f6f5ee,300px 0 #e3e0d0,301px 0 #f6f5ee"></i>
</div>
<div id="taskbar">
<!-- start -->
<div class="abs" style="left:0;top:1px;width:89px;height:29px;border-radius:0 14px 14px 0/0 15px 15px 0;background:linear-gradient(#5b5d68 0,#3c3d46 20%,#26272d 40%,#050506 44%,#000 75%,#0d0d11);border:1px solid #62667c;border-left:0"></div>
<svg class="abs" style="left:9px;top:5px" width="22" height="20" viewBox="0 0 22 20"><path d="M2.500 3c2.500-1.500 5-1.500 7.500 0l-1.500 6c-2.500-1.500-5-1.500-7.500 0z" fill="#e8502c"/><path d="M11.500 3.500c2.500 1.500 5 1.500 7.500 0l-1.500 6c-2.500 1.500-5 1.500-7.500 0z" fill="#7dc242"/><path d="M0.800 10.500c2.500-1.500 5-1.500 7.500 0l-1.500 6c-2.500-1.500-5-1.500-7.500 0z" fill="#3d8fe0"/><path d="M9.500 11c2.500 1.500 5 1.500 7.500 0l-1.500 6c-2.500 1.500-5 1.500-7.500 0z" fill="#f7c52c"/></svg>
<span class="abs" style="left:36px;top:1px;color:#fff;font:21px/26px 'Liberation Sans',sans-serif;letter-spacing:-0.3px">start</span>
<!-- quick launch -->
<svg class="abs" style="left:99px;top:6px" width="18" height="18" viewBox="0 0 18 18"><circle cx="9" cy="9.500" r="6" fill="none" stroke="#3f9be8" stroke-width="3"/><path d="M4 9.500h11" stroke="#3f9be8" stroke-width="2.200"/><path d="M10 12h6" stroke="#1d1f2c" stroke-width="2.500"/><path d="M1 14c-1-6 9-13 16-11" fill="none" stroke="#5db5f5" stroke-width="1.300"/></svg>
<svg class="abs" style="left:125px;top:6px" width="13" height="19" viewBox="0 0 13 19"><path d="M2 2.500l9-1.500l-1 10.500l-6 1z" fill="#8fb8ee" stroke="#d6e6fa"/><path d="M2.500 15c2.500-2 6-2 8.500 0c-2.500 2.500-6 2.500-8.500 0z" fill="#cfc4e6"/></svg>
<svg class="abs" style="left:146px;top:6px" width="18" height="18" viewBox="0 0 18 18"><rect x="1" y="2" width="14" height="14" rx="2" fill="#2f7fe0" stroke="#8fc0f8"/><path d="M5 5.500h6v7h-6z" fill="#fff"/><path d="M7 8h4M7 10.500h3" stroke="#2f7fe0" stroke-width="1.300"/><circle cx="15.500" cy="6" r="1.300" fill="#e04a2a"/></svg>
<span class="abs" style="left:173px;top:0;color:#8e92a8;font:bold 15px/14px 'Liberation Sans',sans-serif">»</span>
<!-- task buttons -->
<div class="tbtn" style="left:190px;width:158px"><svg class="abs" style="left:6px;top:3px" width="17" height="17" viewBox="0 0 17 17"><circle cx="8.500" cy="8.500" r="7.500" fill="#2f78d8" stroke="#e4eefc" stroke-width="1.600"/><path d="M5 12v-5.500h7v5.500M8.500 7v5" fill="none" stroke="#fff" stroke-width="1.700"/></svg><span class="abs" style="left:27px;top:0">您医院接受过医院管...</span></div>
<div class="tbtn" style="left:349px;width:160px"><svg class="abs" style="left:6px;top:3px" width="17" height="17" viewBox="0 0 17 17"><circle cx="8.500" cy="8.500" r="7.500" fill="#f4f4f8" stroke="#b8bccb"/><path d="M4.500 13l7-8.500M6.500 4.500h5.500v5.500" fill="none" stroke="#e0201c" stroke-width="2.200"/></svg><span class="abs" style="left:28.500px;top:0;font-size:11px">Ava Find</span></div>
<div class="tbtn act" style="left:511px;width:158px"><svg class="abs" style="left:7px;top:3px" width="18" height="18" viewBox="0 0 18 18"><path d="M6.500 1.500h8l2 2v13h-10z" fill="#c9d9f2" stroke="#3a5a9a"/><path d="M8 5h7M8 8h7M8 11h7M8 14h7" stroke="#7f9fd6"/><rect x="0.500" y="1.500" width="9" height="9" fill="#4c9b50" stroke="#cfe6cf"/><path d="M2.500 3.500l5 5m0-5l-5 5" stroke="#e8f5e8" stroke-width="1.600"/></svg><span class="abs" style="left:28px;top:0">图表 在 片段</span></div>
<!-- tray -->
<svg class="abs" style="left:760px;top:8px" width="16" height="14" viewBox="0 0 16 14"><path d="M2 3v-3h1v3M5 3v-3h1v3M8 3v-3h1v3M11 3v-3h1v3" stroke="#e8e8ee" fill="none"/><rect x="0.500" y="3.500" width="15" height="9" fill="#e8e8ee"/><path d="M2 6h12M2 8.500h12M3 10.500h10" stroke="#2a2c3d" stroke-dasharray="1.500 1"/></svg>
<svg class="abs" style="left:783px;top:6px" width="14" height="17" viewBox="0 0 14 17"><path d="M1.500 15.500l6-7" stroke="#f0f0f4" stroke-width="2.200"/><ellipse cx="10" cy="5" rx="3.600" ry="2.600" transform="rotate(-45 10 5)" fill="#cfd2de" stroke="#f4f4f8"/></svg>
<svg class="abs" style="left:804px;top:8px" width="17" height="14" viewBox="0 0 17 14"><rect x="0.500" y="0.500" width="16" height="12" fill="#ececf0" stroke="#fff"/><rect x="3" y="5" width="4.500" height="4.500" fill="#fff" stroke="#1c1e2b" stroke-width="1.400"/><rect x="9.500" y="5" width="4.500" height="4.500" fill="#fff" stroke="#1c1e2b" stroke-width="1.400"/></svg>
<svg class="abs" style="left:835px;top:9px" width="8" height="12" viewBox="0 0 8 12"><path d="M6.500 1l-5 5l5 5" fill="none" stroke="#d8dae4" stroke-width="1.500"/></svg>
<svg class="abs" style="left:852px;top:6px" width="17" height="17" viewBox="0 0 17 17"><circle cx="8.500" cy="8.500" r="7.500" fill="#f4f4f8" stroke="#4a8ae0" stroke-width="1.400"/><path d="M4.500 13l7-8.500M6.500 4.500h5.500v5.500" fill="none" stroke="#e0201c" stroke-width="2.200"/></svg>
<svg class="abs" style="left:870px;top:5px" width="17" height="18" viewBox="0 0 17 18"><rect x="6.500" y="0.500" width="9" height="8" fill="#7fb4f0" stroke="#d8e8fc"/><rect x="0.500" y="5.500" width="9" height="8" fill="#5f9ce8" stroke="#d8e8fc"/><path d="M2 16.500h7M11 11.500h5" stroke="#c8ccd8" stroke-width="1.500"/></svg>
<svg class="abs" style="left:888px;top:5px" width="20" height="19" viewBox="0 0 20 19"><ellipse cx="7.500" cy="8" rx="5" ry="6" transform="rotate(-20 7.500 8)" fill="#8c8f9c" stroke="#d0d2dc"/><ellipse cx="8.500" cy="8" rx="2.200" ry="2.800" fill="#3a3c48"/><path d="M11 17c4-1 6-3 7-6" fill="none" stroke="#6a6ee0" stroke-width="1.500"/></svg>
<svg class="abs" style="left:905px;top:6px" width="18" height="17" viewBox="0 0 18 17"><path d="M9 0.500l8 7h-16z" fill="#3cc83c"/><path d="M9 16.500l8-7h-16z" fill="#2aa02a"/></svg>
<svg class="abs" style="left:924px;top:6px" width="17" height="17" viewBox="0 0 17 17"><circle cx="8.500" cy="8.500" r="7.500" fill="#2f78d8" stroke="#e4eefc" stroke-width="1.600"/><path d="M5 12v-5.500h7v5.500M8.500 7v5" fill="none" stroke="#fff" stroke-width="1.700"/></svg>
<svg class="abs" style="left:945px;top:5px" width="14" height="19" viewBox="0 0 14 19"><path d="M1 2.500l6-2l6 2v9c0 3-3 5.500-6 7c-3-1.500-6-4-6-7z" fill="#3f78d0" stroke="#9cc0f0"/><path d="M4 13c0-4 2-5 3-8c1 3 3 4 3 8z" fill="#f7a040"/></svg>
<svg class="abs" style="left:962px;top:7px" width="16" height="15" viewBox="0 0 16 15"><path d="M2 0v8.500c0 6 12 6 12 0v-8.500" fill="none" stroke="#5a3ce8" stroke-width="4"/></svg>
<span class="abs" style="left:985px;top:6px;color:#fff;font:12px/16px 'Liberation Sans',sans-serif">1</span>
</div>
<!-- stamp -->
<svg class="abs" style="left:989px;top:734px" width="31" height="30" viewBox="0 0 31 30"><rect x="0.750" y="0.750" width="29.500" height="27.500" fill="#fdf1ef" stroke="#d8303a" stroke-width="1.500"/><g stroke="#de4a52" stroke-width="0.900" fill="none"><path d="M4 4.500h4.500M4 7h4.500M6.200 3.500v5M4 10.500h4.500v3h-4.500zM4 16.500h4.500M4 19h4.500M6.200 15.500v5.500M4 23h4.500v2.500h-4.500zM11.500 4h4.500M11.500 6.500h4.500M13.700 3.500v5M11.500 10.500h4.500M11.500 13h4.500M12.500 10.500v4M15 10.500v4M11.500 16.500h4.500v3.500h-4.500zM11.500 18.200h4.500M11.500 23h4.500M13.700 22v4M19 4h4M19 6.500h4M21 3.500v5M19 10.500h4v3h-4zM19 12h4M19 16.500h4M19 19h4M21 15.500v5.500M19 23h4v2.500h-4zM26 4.500h2.500M26 7h2.500M27.200 3.500v5M26 11h2.500M26 14h2.500M27.200 10v5M26 18h2.500M27.200 17v5M26 24h2.500"/></g></svg>
</body>
</html>
